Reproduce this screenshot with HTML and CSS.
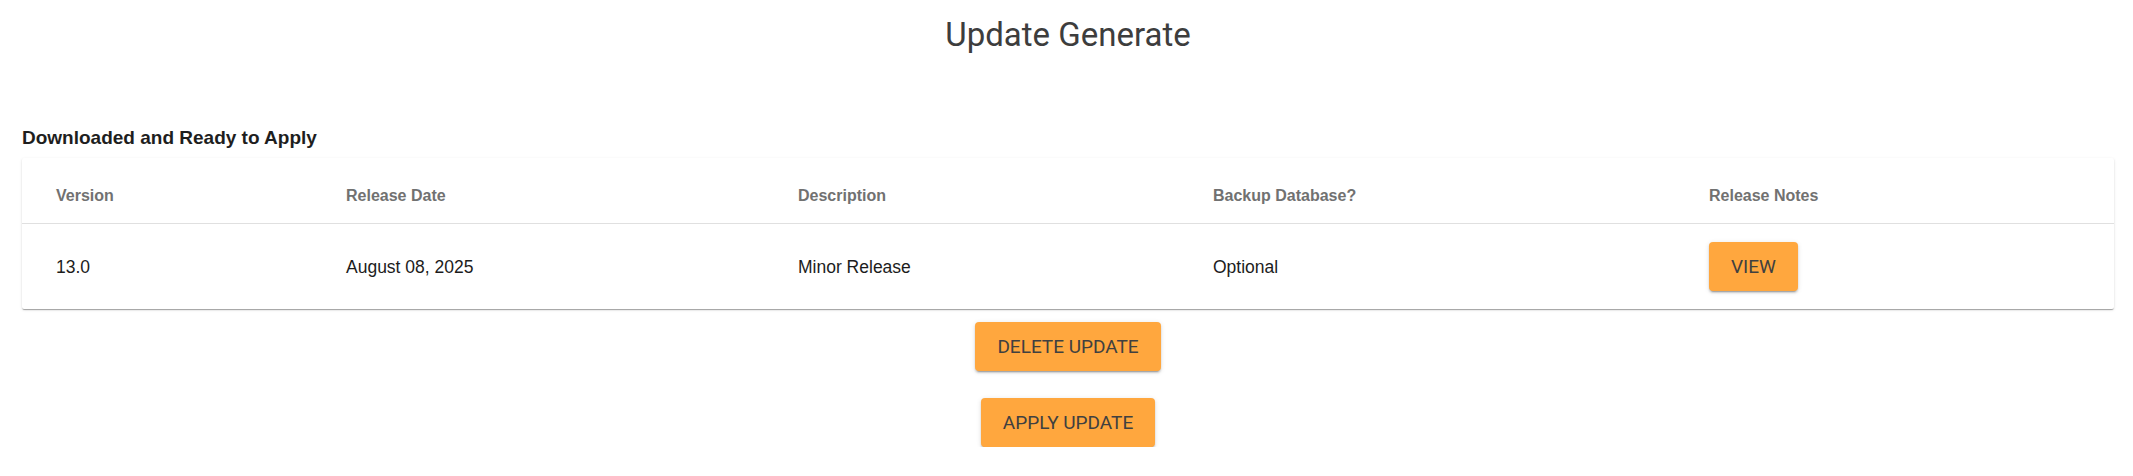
FILE: index.html
```html
<!DOCTYPE html>
<html lang="en">
<head>
<meta charset="utf-8">
<title>Update Generate</title>
<link rel="stylesheet" href="styles.css">
</head>
<body>
<main class="page">
  <h1 class="page-title">Update Generate</h1>
  <section class="updates">
    <h2 class="section-title">Downloaded and Ready to Apply</h2>
    <div class="card">
      <table class="update-table">
        <colgroup>
          <col class="col-version">
          <col class="col-date">
          <col class="col-desc">
          <col class="col-backup">
          <col class="col-notes">
        </colgroup>
        <thead>
          <tr>
            <th>Version</th>
            <th>Release Date</th>
            <th>Description</th>
            <th>Backup Database?</th>
            <th>Release Notes</th>
          </tr>
        </thead>
        <tbody>
          <tr>
            <td>13.0</td>
            <td>August 08, 2025</td>
            <td>Minor Release</td>
            <td>Optional</td>
            <td class="notes-cell"><button class="btn" type="button">View</button></td>
          </tr>
        </tbody>
      </table>
    </div>
    <div class="actions">
      <button class="btn" type="button">Delete Update</button>
      <button class="btn" type="button">Apply Update</button>
    </div>
  </section>
</main>
</body>
</html>
```

FILE: styles.css
```css
html, body {
  margin: 0;
  padding: 0;
  background: #ffffff;
}

.page {
  padding: 0 19px 0 22px;
}

.page-title {
  margin: 15px 0 0;
  font-family: Roboto, "Noto Sans", sans-serif;
  font-weight: 400;
  font-size: 33px;
  line-height: 40px;
  color: #3d3d3d;
  text-align: center;
}

.section-title {
  margin: 72px 0 9px;
  font-family: "Liberation Sans", Arial, sans-serif;
  font-weight: 700;
  font-size: 19px;
  line-height: 22px;
  color: #1e1e1e;
}

.card {
  background: #ffffff;
  border-radius: 2px;
  box-shadow: 0 2px 1px -1px rgba(0,0,0,0.2), 0 1px 1px 0 rgba(0,0,0,0.14), 0 1px 3px 0 rgba(0,0,0,0.12);
}

.update-table {
  width: 100%;
  border-collapse: collapse;
  table-layout: fixed;
  font-family: "Liberation Sans", Arial, sans-serif;
}

.col-version { width: 324px; }
.col-date { width: 452px; }
.col-desc { width: 415px; }
.col-backup { width: 496px; }

.update-table th {
  padding: 28px 0 17px;
  font-size: 16px;
  line-height: 20px;
  font-weight: 700;
  color: #717171;
  text-align: left;
  border-bottom: 1px solid #e0e0e0;
}

.update-table td {
  padding: 18px 0;
  font-size: 17.5px;
  line-height: 20px;
  color: #1c1c1c;
  vertical-align: middle;
}

.update-table th:first-child,
.update-table td:first-child {
  padding-left: 34px;
}

.btn {
  display: flex;
  align-items: center;
  justify-content: center;
  width: max-content;
  height: 49px;
  margin: 0;
  padding: 0 22px;
  border: none;
  border-radius: 4px;
  background: #ffa73e;
  color: #404040;
  font-family: Roboto, "Noto Sans", sans-serif;
  font-size: 19px;
  font-weight: 400;
  text-transform: uppercase;
  box-shadow: 0 3px 1px -2px rgba(0,0,0,0.2), 0 2px 2px 0 rgba(0,0,0,0.14), 0 1px 5px 0 rgba(0,0,0,0.12);
  cursor: pointer;
}

.actions {
  display: flex;
  flex-direction: column;
  align-items: center;
  gap: 27px;
  padding-top: 13px;
}
```
